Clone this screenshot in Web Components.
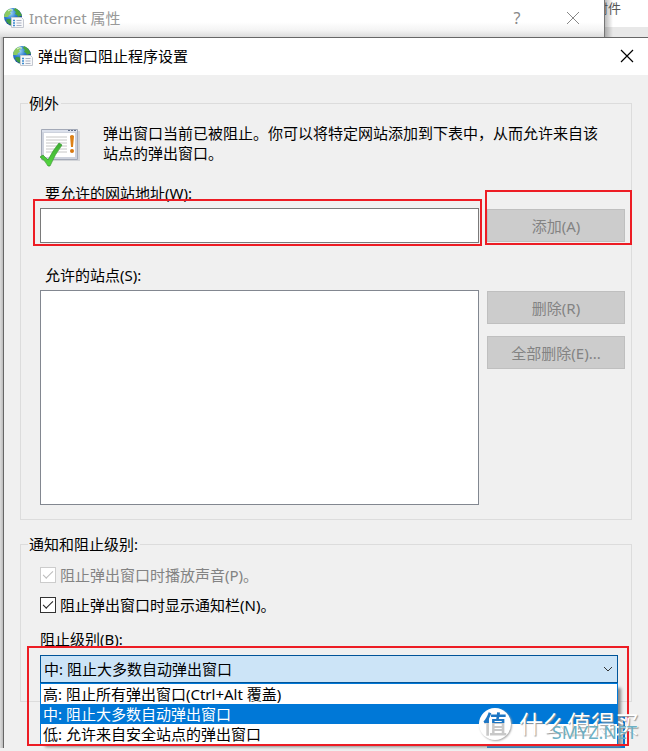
<!DOCTYPE html>
<html lang="zh-CN">
<head>
<meta charset="utf-8">
<title>弹出窗口阻止程序设置</title>
<style>
  body {
    margin: 0;
    min-height: 100vh;
    overflow: hidden;
    background: #f0f0f0;
    color: #000;
    font: 15px/20px 'Noto Sans', 'Noto Sans CJK SC', sans-serif;
  }
</style>
</head>
<body>
<internet-options>
  <popup-dialog heading="弹出窗口阻止程序设置">
    <group-box label="例外">
      <site-exceptions></site-exceptions>
    </group-box>
    <group-box label="通知和阻止级别:">
      <block-level></block-level>
    </group-box>
  </popup-dialog>
</internet-options>
<site-watermark></site-watermark>

<script>
const globeIcon = `
<svg class="globe" width="20" height="20" viewBox="0 0 20 20" aria-hidden="true">
  <defs>
    <radialGradient id="sea" cx="35%" cy="28%" r="75%">
      <stop offset="0" stop-color="#a8dcf5"/>
      <stop offset=".45" stop-color="#2f7fd0"/>
      <stop offset="1" stop-color="#12358c"/>
    </radialGradient>
  </defs>
  <circle cx="9" cy="9" r="9" fill="url(#sea)"/>
  <path d="M1 5Q3 1 7 1L8 3 6 4 7 6 5 7 4 9 2 9 0 9Q0 7 1 5Z" fill="#8ccb62"/>
  <path d="M11 0Q16 2 18 8L16 8 14 9 13 7 11 6 12 4 10 2Z" fill="#4ba53c"/>
  <path d="M3 11L6 11 8 13 7 17Q4 16 2 13Z" fill="#3e9a44"/>
  <path d="M4 3Q6 1 9 2" fill="none" stroke="#e4f7d8" stroke-width="1"/>
  <path d="M7.500 9.500H17.500L19.500 11.500V19.500H7.500Z" fill="#f7f8fa" stroke="#c4c8d0"/>
  <path d="M9 12.500h2M9 15h2M9 17.500h2" stroke="#3a8ad0" stroke-width="1.500"/>
  <path d="M12.500 12.500h5M12.500 15h5M12.500 17.500h5" stroke="#aab1c2"/>
</svg>`;

// 带标题栏的父窗口，被对话框盖住大部分
class InternetOptions extends HTMLElement {
  constructor() {
    super();
    this.attachShadow({ mode: 'open' }).innerHTML = `
<style>
  :host { display: block; }
  .top { display: flex; height: 37px; }
  .bar {
    flex: 1;
    display: flex;
    align-items: center;
    box-sizing: border-box;
    padding: 0 23px 2px 4px;
    background: linear-gradient(#fff 22px, #f4f4f4 30px, #dcdcdc);
    color: #999;
    border-right: 1px solid #777;
  }
  .name { flex: 1; margin-left: 5px; }
  button {
    border: 0;
    padding: 0;
    background: none;
    color: #888;
    font: inherit;
    font-size: 16px;
    width: 16px;
    height: 20px;
  }
  .close { margin-left: 40px; }
  .close svg { display: block; margin: 3px auto; }
  .ribbon {
    width: 43px;
    overflow: hidden;
    background: linear-gradient(90deg, #0004, #0000 8px), linear-gradient(#fff 27px, #e8e8e8 27px);
    color: #555;
    font-size: 13px;
    line-height: 16px;
  }
  .ribbon span { display: block; margin-left: -10px; }
  .work { padding-left: 3px; background: linear-gradient(90deg, #ddd, #bbb 3px); }
</style>
<div class="top">
  <div class="bar">
    ${globeIcon}
    <span class="name">Internet 属性</span>
    <button>?</button>
    <button class="close" aria-label="关闭"><svg width="14" height="14"><path d="M1 1L13 13M13 1L1 13" stroke="#888"/></svg></button>
  </div>
  <div class="ribbon"><span>附件</span></div>
</div>
<div class="work"><slot></slot></div>`;
  }
}

class PopupDialog extends HTMLElement {
  constructor() {
    super();
    this.attachShadow({ mode: 'open' });
  }

  connectedCallback() {
    this.shadowRoot.innerHTML = `
<style>
  :host {
    display: block;
    border: solid #666;
    border-width: 1px 0 0 1px;
    background: #f0f0f0;
  }
  header {
    display: flex;
    align-items: center;
    box-sizing: border-box;
    height: 37px;
    padding: 0 14px 2px 9px;
    background: #fff;
  }
  h1 { flex: 1; margin: 0 0 0 5px; font: inherit; }
  .close { border: 0; padding: 0; background: none; height: 14px; }
  .close svg { display: block; }
  main {
    display: flex;
    flex-direction: column;
    gap: 14px;
    padding: 18px 16px 14px;
  }
  footer { display: flex; justify-content: flex-end; padding-right: 23px; }
  .ok {
    width: 138px;
    height: 32px;
    border: 2px solid #0078d7;
    background: #ccc;
  }
</style>
<header>
  ${globeIcon}
  <h1>${this.getAttribute('heading')}</h1>
  <button class="close" aria-label="关闭"><svg width="14" height="14"><path d="M1 1L13 13M13 1L1 13" stroke="#000" stroke-width="1.200"/></svg></button>
</header>
<main><slot></slot></main>
<footer><button class="ok" aria-label="关闭"></button></footer>`;
  }
}

class GroupBox extends HTMLElement {
  constructor() {
    super();
    this.attachShadow({ mode: 'open' });
  }

  connectedCallback() {
    this.shadowRoot.innerHTML = `
<style>
  :host { display: block; }
  fieldset {
    margin: 0;
    padding: 0 6px 14px 19px;
    border: 1px solid #dcdcdc;
    min-width: 0;
  }
  legend { margin-left: -12px; padding: 0 2px 0 1px; }
</style>
<fieldset><legend>${this.getAttribute('label')}</legend><slot></slot></fieldset>`;
  }
}

// 红色标注框，四边外扩距离由 --mark 指定
class RedMark extends HTMLElement {
  constructor() {
    super();
    this.attachShadow({ mode: 'open' }).innerHTML = `
<style>
  :host { display: block; position: relative; }
  .frame {
    position: absolute;
    inset: var(--mark);
    border: 2px solid #ed1c24;
    pointer-events: none;
    z-index: 2;
  }
</style>
<slot></slot><div class="frame"></div>`;
  }
}

class PushButton extends HTMLElement {
  constructor() {
    super();
    this.attachShadow({ mode: 'open' }).innerHTML = `
<style>
  :host { display: block; }
  button {
    display: block;
    width: 100%;
    height: 33px;
    padding: 0;
    border: 1px solid #bfbfbf;
    background: #ccc;
    color: #838383;
    font: inherit;
  }
</style>
<button disabled><slot></slot></button>`;
  }
}

class SiteExceptions extends HTMLElement {
  constructor() {
    super();
    this.attachShadow({ mode: 'open' }).innerHTML = `
<style>
  :host { display: block; }
  .intro { display: flex; gap: 23px; padding-top: 10px; }
  .intro svg { flex: none; margin-top: 5px; }
  .intro p { margin: 0; padding-right: 24px; }
  .grid {
    display: grid;
    grid-template-columns: 1fr 138px;
    column-gap: 8px;
    margin-top: 15px;
  }
  label { grid-column: 1 / -1; padding-left: 5px; }
  .sites { margin-top: 22px; margin-bottom: 5px; }
  .address { --mark: -9px -3px -3px -7px; margin-top: 5px; }
  .add { --mark: -19px -7px -2px -2px; margin-top: 6px; }
  input {
    display: block;
    box-sizing: border-box;
    width: 100%;
    height: 35px;
    margin: 0;
    border: 1px solid #7a7a7a;
    background: #fff;
    font: inherit;
  }
  select {
    display: block;
    width: 100%;
    height: 215px;
    margin: 0;
    border: 1px solid #828790;
    border-radius: 0;
    background: #fff;
    font: inherit;
  }
  .actions { display: flex; flex-direction: column; gap: 12px; padding-top: 1px; }
</style>
<div class="intro">
  <svg width="40" height="40" viewBox="0 0 40 40" aria-hidden="true">
    <defs>
      <linearGradient id="tick" x2="0" y2="1"><stop stop-color="#3fae35"/><stop offset="1" stop-color="#55d83f"/></linearGradient>
    </defs>
    <path d="M2 3h38v30H2Z" fill="#d2d4d8"/>
    <path d="M1.500 1.500h36v30h-36Z" fill="#cdd2dd" stroke="#a3a9b7"/>
    <path d="M2 2h35v2H2Z" fill="#dce1ec"/>
    <path d="M28 2.500h2M31 2.500h2M34 2.500h2" stroke="#65728c"/>
    <path d="M4 5h31v24H4Z" fill="#fff"/>
    <path d="M6 9h21M6 12h21M6 15h21M6 18h21M6 21h21M6 24h21" stroke="#c6c6c6"/>
    <path d="M30 8Q32 6 34 8L33 19H31Z" fill="#dc8117"/>
    <circle cx="32" cy="23" r="2" fill="#d7780f"/>
    <path d="M0 29L3 27 8 32Q13 22 19 15L22 17Q15 26 10 38H8Q5 32 0 29Z" fill="url(#tick)" stroke="#35972c" stroke-width=".7"/>
  </svg>
  <p>弹出窗口当前已被阻止。你可以将特定网站添加到下表中，从而允许来自该站点的弹出窗口。</p>
</div>
<div class="grid">
  <label for="address">要允许的网站地址(W):</label>
  <red-mark class="address"><input id="address" type="text"></red-mark>
  <red-mark class="add"><push-button>添加(A)</push-button></red-mark>
  <label class="sites" for="sites">允许的站点(S):</label>
  <select id="sites" size="8"></select>
  <div class="actions">
    <push-button>删除(R)</push-button>
    <push-button>全部删除(E)...</push-button>
  </div>
</div>`;
  }
}

class BlockLevel extends HTMLElement {
  constructor() {
    super();
    this.attachShadow({ mode: 'open' }).innerHTML = `
<style>
  :host { display: block; }
  .check { display: flex; align-items: center; gap: 4px; height: 30px; }
  .first { margin-top: 6px; }
  .off { color: #838383; }
  input {
    appearance: none;
    display: grid;
    box-sizing: border-box;
    width: 16px;
    height: 16px;
    margin: 0;
    border: 1px solid #333;
    background: #fff;
  }
  input:disabled { border-color: #ccc; }
  input::before {
    content: '';
    width: 9px;
    height: 4px;
    margin: 3px 0 0 2px;
    border: solid #222;
    border-width: 0 0 1px 1px;
    transform: rotate(-45deg);
  }
  input:disabled::before { border-color: #bbb; }
  .level { display: block; margin-top: 9px; }
  red-mark { --mark: -9px -11px -63px -13px; margin: 6px 7px 4px 0; }
  .combo { position: relative; }
  select {
    appearance: none;
    display: block;
    width: 100%;
    height: 28px;
    margin: 0;
    padding: 0 3px;
    border: 1px solid #005499;
    border-radius: 0;
    background: #cce4f7;
    color: #000;
    font: inherit;
  }
  .arrow { position: absolute; right: 5px; top: 11px; }
  ul {
    position: absolute;
    top: 28px;
    left: 0;
    right: 0;
    margin: 0;
    padding: 0;
    list-style: none;
    border: 1px solid #0078d7;
    border-bottom: 0;
    background: #fff;
    box-shadow: 4px 4px 3px -1px #888;
    z-index: 1;
  }
  li { height: 20px; padding-left: 2px; }
  li[aria-selected] { background: #0078d7; color: #fff; }
</style>
<label class="check first off"><input type="checkbox" checked disabled>阻止弹出窗口时播放声音(P)。</label>
<label class="check"><input type="checkbox" checked>阻止弹出窗口时显示通知栏(N)。</label>
<label class="level" for="level">阻止级别(B):</label>
<red-mark>
  <div class="combo">
    <select id="level"><option>中: 阻止大多数自动弹出窗口</option></select>
    <svg class="arrow" width="10" height="7" aria-hidden="true"><path d="M1 1L5 5L9 1" fill="none" stroke="#333"/></svg>
    <ul role="listbox">
      <li role="option">高: 阻止所有弹出窗口(Ctrl+Alt 覆盖)</li>
      <li role="option" aria-selected="true">中: 阻止大多数自动弹出窗口</li>
      <li role="option">低: 允许来自安全站点的弹出窗口</li>
    </ul>
  </div>
</red-mark>`;
  }
}

// 右下角水印
class SiteWatermark extends HTMLElement {
  constructor() {
    super();
    this.attachShadow({ mode: 'open' }).innerHTML = `
<style>
  :host {
    position: absolute;
    right: 9px;
    top: 708px;
    display: flex;
    align-items: center;
    gap: 8px;
    color: #fff;
    font-size: 24px;
    line-height: 32px;
    text-shadow: 1px 1px 1px #999;
    z-index: 3;
  }
  .badge {
    width: 32px;
    height: 32px;
    border-radius: 50%;
    background: #fff;
    color: transparent;
    font-weight: 700;
    text-align: center;
    text-shadow: none;
    box-shadow: 1px 1px 2px #aaa;
  }
  .badge span {
    background: linear-gradient(#1c76c4 16px, #c8c8c8 16px);
    background-clip: text;
  }
  .url {
    position: absolute;
    right: 2px;
    top: 14px;
    color: #6bb0c4;
    font-size: 18px;
    line-height: 20px;
    text-shadow: none;
  }
</style>
<div class="badge"><span>值</span></div><span>什么值得买</span><span class="url">SMYZ.NET</span>`;
  }
}

customElements.define('red-mark', RedMark);
customElements.define('push-button', PushButton);
customElements.define('site-exceptions', SiteExceptions);
customElements.define('block-level', BlockLevel);
customElements.define('group-box', GroupBox);
customElements.define('popup-dialog', PopupDialog);
customElements.define('internet-options', InternetOptions);
customElements.define('site-watermark', SiteWatermark);
</script>
</body>
</html>
